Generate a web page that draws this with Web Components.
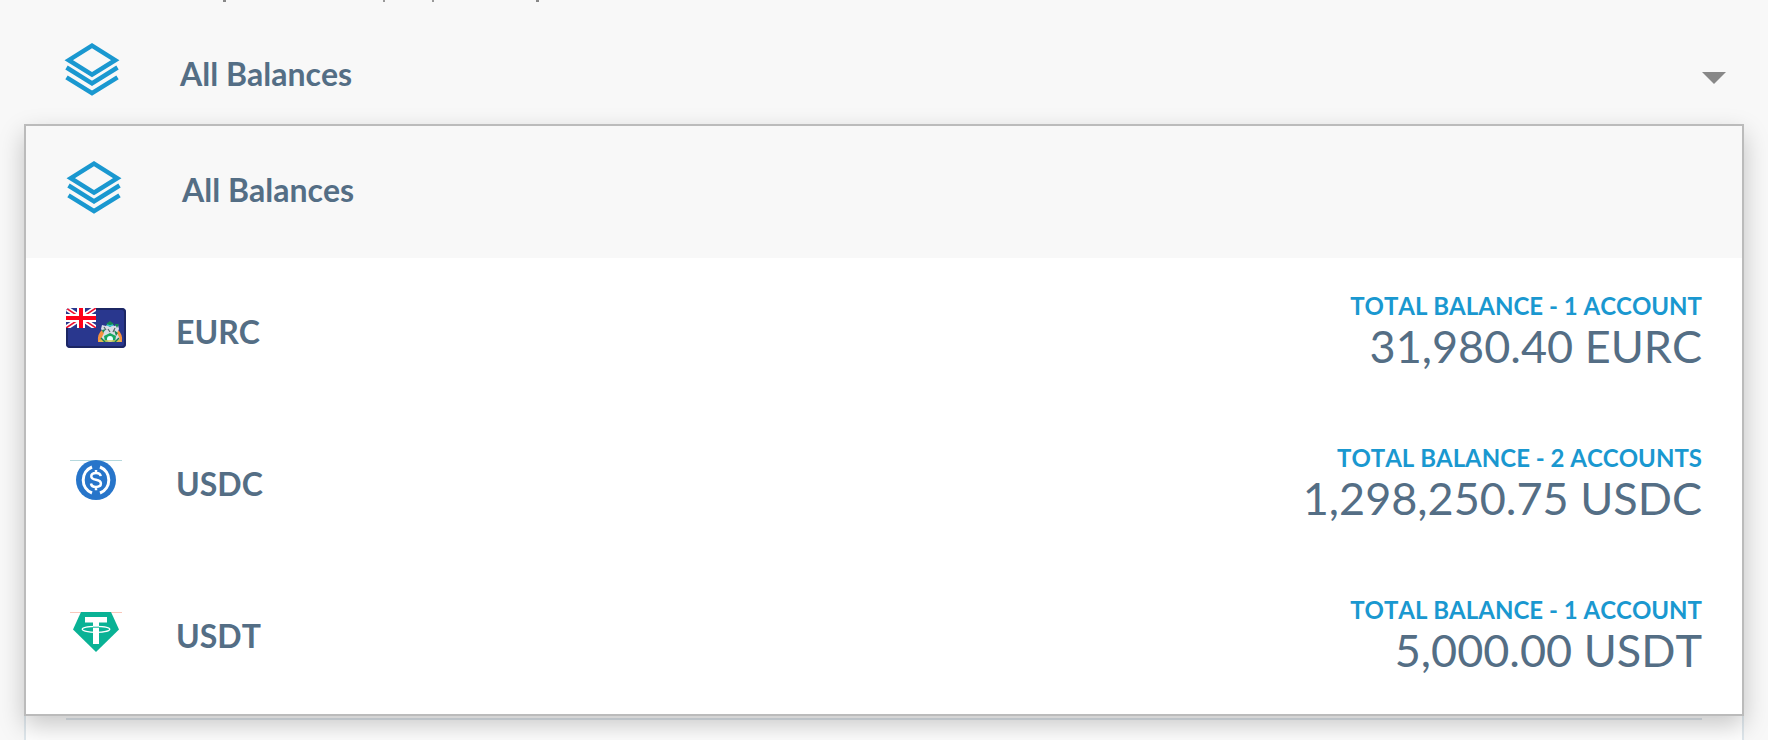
<!DOCTYPE html>
<html lang="en">
<head>
<meta charset="utf-8">
<title>Balances</title>
<style>
html,body{margin:0;height:100%}
body{background:#f8f8f8;font-family:Lato,"Open Sans",sans-serif;font-kerning:none;color:#546e85;overflow:hidden}
</style>
</head>
<body>
<balances-page></balances-page>

<template id="t-page">
<style>
:host{display:flex;flex-direction:column;min-height:100vh;box-sizing:border-box;padding:0 24px}
.rest{flex:1;display:block;box-sizing:border-box;background:#fff;border:solid #dfe7ec;border-width:0 2px;padding:2px 40px 0}
hr{border:0;height:2px;margin:0;background:#dfe7ec}
</style>
<balance-trigger>All Balances</balance-trigger>
<balance-list>
<balance-option kind="all" selected>All Balances</balance-option>
<balance-option kind="eurc" caption="TOTAL BALANCE - 1 ACCOUNT" amount="31,980.40 EURC">EURC</balance-option>
<balance-option kind="usdc" caption="TOTAL BALANCE - 2 ACCOUNTS" amount="1,298,250.75 USDC">USDC</balance-option>
<balance-option kind="usdt" caption="TOTAL BALANCE - 1 ACCOUNT" amount="5,000.00 USDT">USDT</balance-option>
</balance-list>
<section class="rest"><hr></section>
</template>

<template id="t-trigger">
<style>
:host{display:block}
.hint{display:block;height:2px;margin:0 -24px;background:
 linear-gradient(#888,#888) 223px 0/3px 2px no-repeat,
 linear-gradient(#999,#999) 383px 0/2px 2px no-repeat,
 linear-gradient(#999,#999) 432px 0/2px 2px no-repeat,
 linear-gradient(#888,#888) 536px 0/3px 2px no-repeat}
button{display:flex;align-items:flex-start;width:100%;height:122px;box-sizing:border-box;padding:40px 18px 0 40px;border:0;background:none;color:inherit;font:inherit;font-kerning:inherit;text-align:left}
.label{flex:1;font-size:32px;line-height:40px;font-weight:700;padding:12px 0 0 60px}
.caret{width:24px;height:12px;margin-top:30px}
currency-icon{width:56px}
</style>
<span class="hint"></span>
<button type="button" aria-haspopup="listbox" aria-expanded="true">
<currency-icon kind="all"></currency-icon><span class="label"><slot></slot></span>
<svg class="caret" viewBox="0 0 24 12" aria-hidden="true"><path d="M0 0H24L12 12Z" fill="#888"/></svg>
</button>
</template>

<template id="t-list">
<style>
:host{display:block;position:relative;z-index:1;background:#fff;border:2px solid #bbb;box-shadow:0 10px 24px rgba(0,0,0,.22)}
</style>
<slot></slot>
</template>

<template id="t-option">
<style>
:host{display:block}
button{display:flex;align-items:flex-start;width:100%;height:152px;box-sizing:border-box;padding:34px 40px 0;border:0;background:#fff;color:inherit;font:inherit;font-kerning:inherit;text-align:left}
:host([selected]) button{height:132px;background:#f8f8f8}
currency-icon{width:60px;margin-top:16px}
:host([selected]) currency-icon{margin-top:0}
.label{flex:1;font-size:32px;line-height:40px;font-weight:700;padding:20px 0 0 50px}
:host([selected]) .label{padding:10px 0 0 56px}
.figures{display:flex;flex-direction:column;align-items:flex-end}
.caption{font-size:24px;line-height:28px;font-weight:700;color:#1a98d0}
.amount{font-size:45px;line-height:52px}
</style>
<button type="button"><currency-icon></currency-icon><span class="label"><slot></slot></span><span class="figures"><span class="caption"></span><span class="amount"></span></span></button>
</template>

<script>
const ICONS = {
 all: `<svg width="56" height="56" viewBox="0 0 56 56" fill="none" stroke="#1a98d0" stroke-width="4.5"><path d="M28 3.7 51.2 18.2 28 32.6 4.8 18.2Z"/><path d="M2.5 25.5 28 41.4 53.5 25.5M2.5 35.3 28 51.2 53.5 35.3"/></svg>`,
 eurc: `<svg width="60" height="40" viewBox="0 0 60 40"><defs><clipPath id="f"><rect width="60" height="40" rx="4"/></clipPath><clipPath id="u"><rect width="30" height="20"/></clipPath></defs>
<g clip-path="url(#f)"><rect width="60" height="40" fill="#29378e"/><rect x="1" y="1" width="58" height="38" rx="3" fill="none" stroke="#1c2663" stroke-width="2"/>
<g clip-path="url(#u)"><path fill="#29378e" d="M0 0H30V20H0Z"/><path d="M0 0 30 20M30 0 0 20" stroke="#fff" stroke-width="5"/><path d="M0 0 30 20M30 0 0 20" stroke="#f01030" stroke-width="1.6"/><path d="M15 0V20M0 10H30" stroke="#fff" stroke-width="8"/><path d="M15 0V20M0 10H30" stroke="#ff0018" stroke-width="4"/></g>
<path d="M32 34Q31 26 36 22L41 27 39 34ZM56 34Q57 26 52 22L47 27 49 34Z" fill="#f5923e"/>
<path d="M36 17 40 18 44 14 48 18 52 17 53 21 51 25 54 31 49 33 44 34 38 33 35 31 38 25 35 21Z" fill="#d8dce6"/>
<path d="M40 16 44 13 48 16 44 19ZM49 16H53L51 20ZM36 22 40 21 37 25ZM48 22 52 25 50 28Z" fill="#148a52"/><path d="M41 17 44 18 47 17" stroke="#36c6d0" stroke-width="1.5" fill="none"/><path d="M38 19 40 22M49 20 47 24M42 21 44 24" stroke="#566" stroke-width="1.2"/>
<path d="M38 28 44 25 50 28 49 34H39Z" fill="#18a860"/><circle cx="44" cy="31" r="3" fill="#e6ffff"/><path d="M33 33H55" stroke="#d6c45a" stroke-width="1.6"/><path d="M35 30 39 34M53 30 49 34" stroke="#13824c" stroke-width="1.5"/></g></svg>`,
 usdc: `<svg width="60" height="40" viewBox="0 0 60 40"><path d="M4 .5H56" stroke="#b5d8dd"/><circle cx="30" cy="20" r="20" fill="#2775ca"/><g fill="none" stroke="#fff"><path d="M26 7A14 14 0 0 0 26 33M34 7A14 14 0 0 1 34 33" stroke-width="3"/><path d="M34.7 16.2C34.4 14 32.8 13 30 13 27 13 25.3 14.3 25.3 16.3 25.3 18.6 27 19.3 30 19.8 33.2 20.3 34.9 21.2 34.9 23.6 34.9 25.8 33 27 30 27 27 27 25.3 25.9 25 23.5M30 10V13M30 27V30.2" stroke-width="2.5"/></g></svg>`,
 usdt: `<svg width="60" height="40" viewBox="0 0 60 40"><path d="M4 .5H56" stroke="#fac8bc"/><path d="M15 0H45L53 17.5 30 40 7 17.5Z" fill="#09b295"/><path d="M19 5H41V10.5H33V32H27V10.5H19Z" fill="#fff"/><ellipse cx="30" cy="17.3" rx="13.8" ry="3" fill="none" stroke="#fff" stroke-width="1.2"/><path d="M27 15.2H33" stroke="#09b295"/></svg>`
};
const define = (name, id, setup) => customElements.define(name, class extends HTMLElement {
  connectedCallback() {
    if (this.shadowRoot) return;
    this.attachShadow({mode: "open"}).append(document.getElementById(id).content.cloneNode(true));
    if (setup) setup(this, this.shadowRoot);
  }
});
customElements.define("currency-icon", class extends HTMLElement {
  static observedAttributes = ["kind"];
  constructor() { super(); this.attachShadow({mode: "open"}); }
  attributeChangedCallback(name, old, kind) {
    this.shadowRoot.innerHTML = `<style>:host{display:block;flex:none}svg{display:block}</style>${ICONS[kind] || ""}`;
  }
});
define("balance-option", "t-option", (el, root) => {
  root.querySelector("currency-icon").setAttribute("kind", el.getAttribute("kind"));
  root.querySelector(".caption").textContent = el.getAttribute("caption") || "";
  root.querySelector(".amount").textContent = el.getAttribute("amount") || "";
});
define("balance-list", "t-list");
define("balance-trigger", "t-trigger");
define("balances-page", "t-page");
</script>
</body>
</html>
